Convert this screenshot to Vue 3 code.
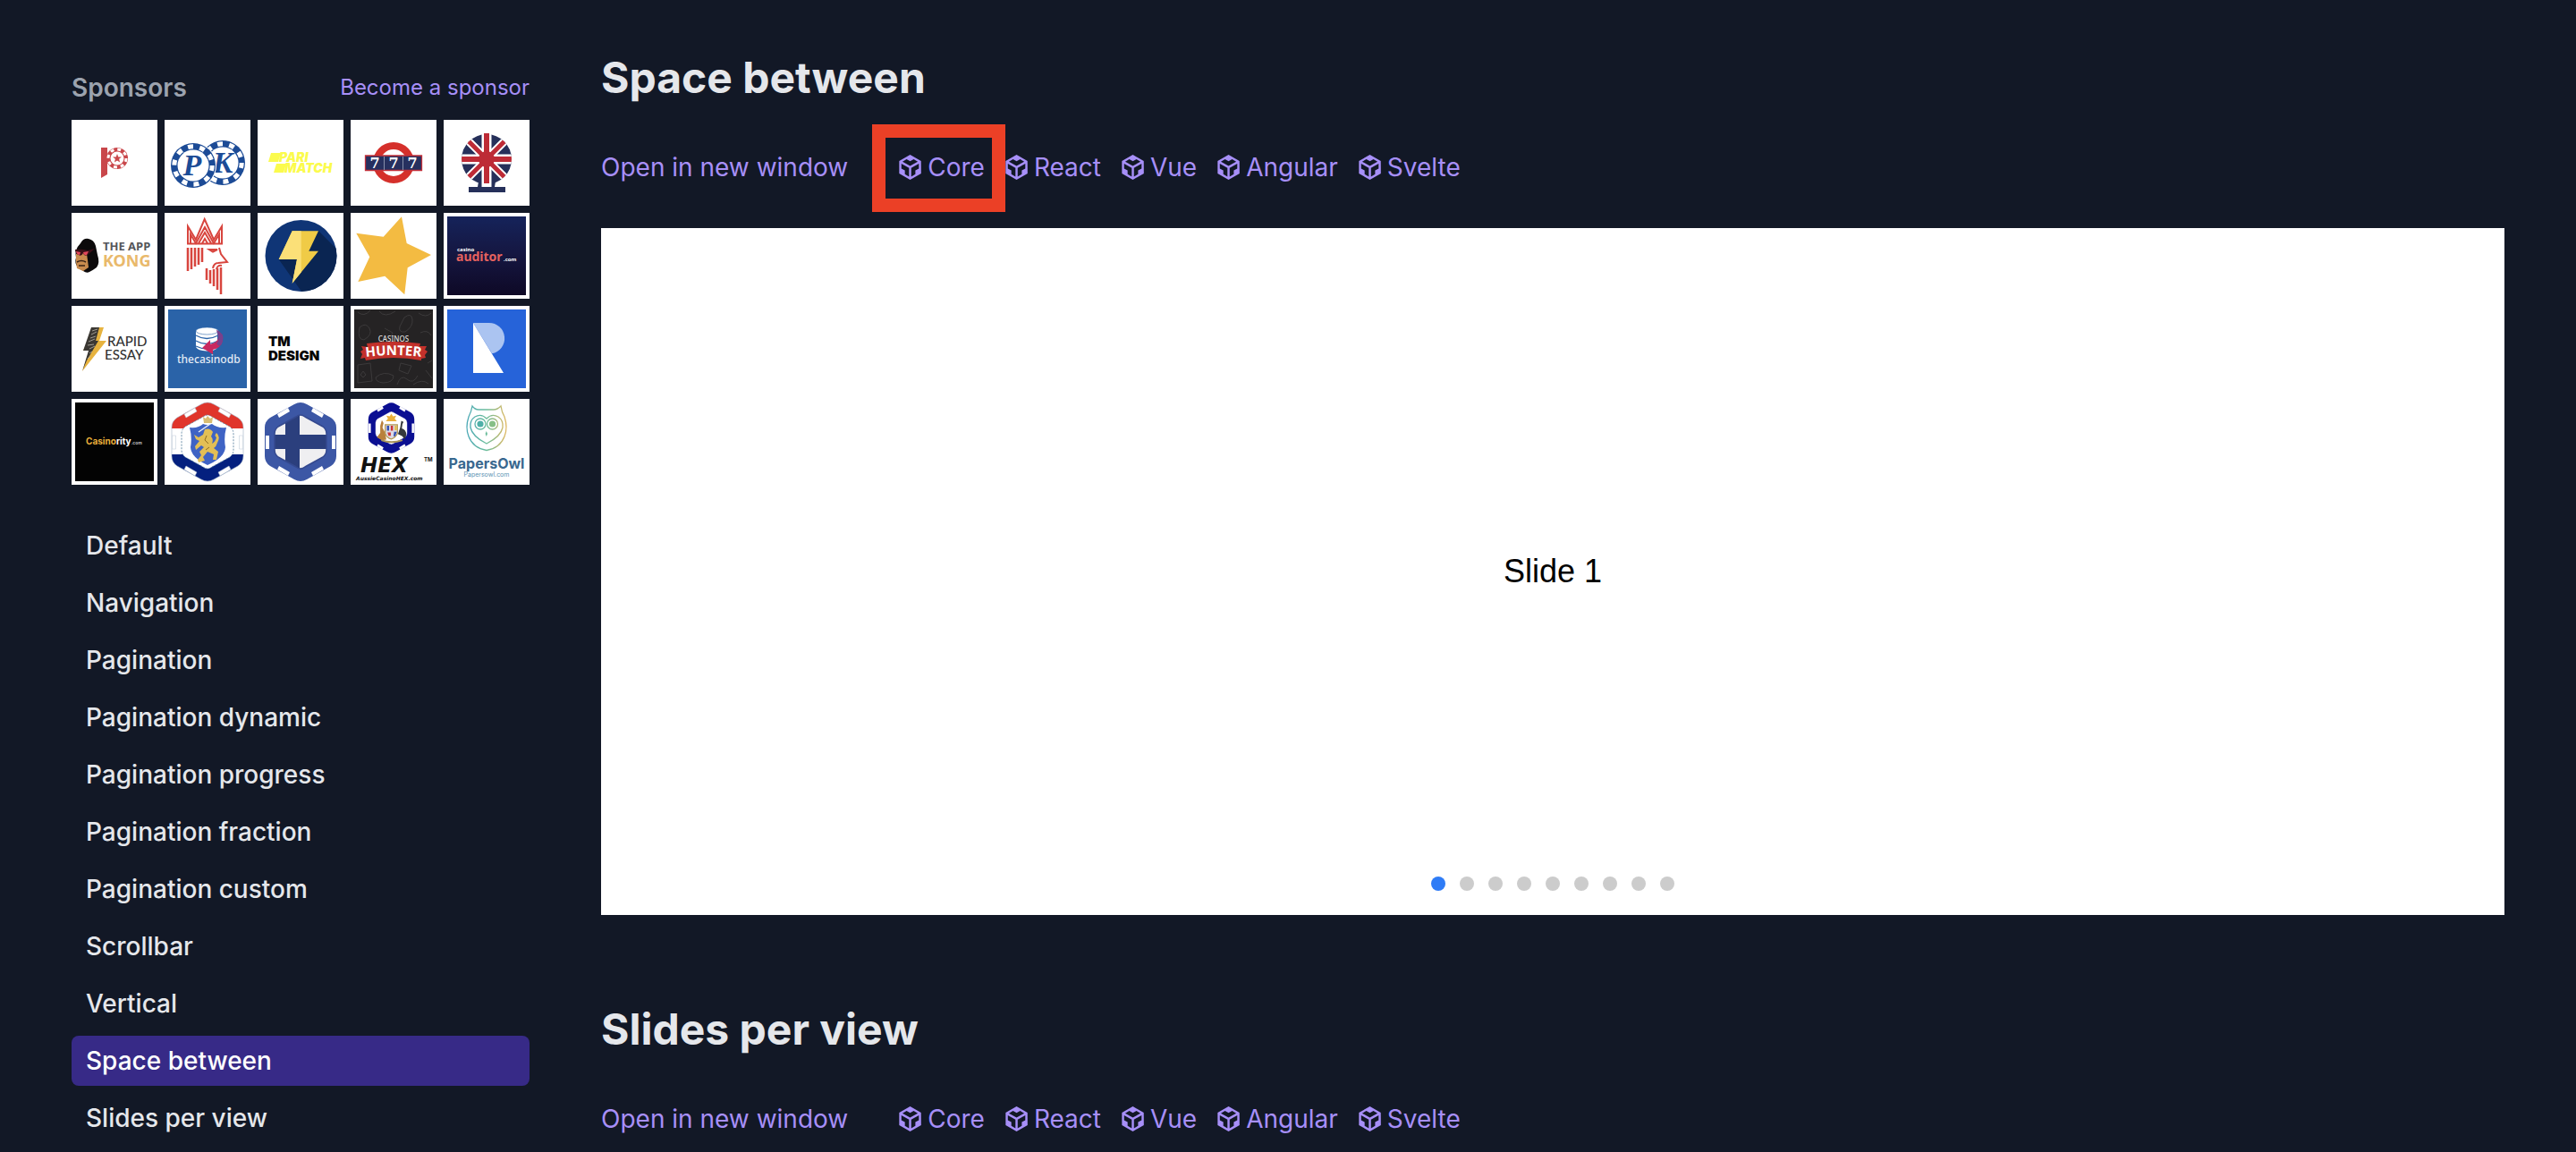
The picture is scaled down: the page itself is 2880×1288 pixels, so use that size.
<script setup>
import { ref } from "vue";

const demos = [
  "Default",
  "Navigation",
  "Pagination",
  "Pagination dynamic",
  "Pagination progress",
  "Pagination fraction",
  "Pagination custom",
  "Scrollbar",
  "Vertical",
  "Space between",
  "Slides per view",
];
const frameworks = ["Core", "React", "Vue", "Angular", "Svelte"];

const activeDemo = ref("Space between");
const activeSlide = ref(1);

const sections = [
  { title: "Space between", marked: "Core", slides: 9 },
  { title: "Slides per view", marked: null, slides: 0 },
];

// shared outlines for the casino chip logos
const hex =
  "M41 6Q48 2 55 6L82 21Q88 25 88 32V64Q88 71 82 75L55 90Q48 94 41 90L14 75Q8 71 8 64V32Q8 25 14 21Z";
const innerHex =
  "M43 20Q48 16 53 20L73 31Q77 34 77 39V57Q77 62 73 65L53 76Q48 80 43 76L23 65Q19 62 19 57V39Q19 34 23 31Z";
</script>

<template>
  <div class="page">
    <aside class="sidebar">
      <div class="sponsors-head">
        <span class="sponsors-title">Sponsors</span>
        <a class="become" href="#sponsor">Become a sponsor</a>
      </div>

      <div class="sponsors">
        <a href="#sponsor" aria-label="Chip P">
          <svg viewBox="0 0 96 96">
            <path d="M33 31h7v30l-7 4z" fill="#c9474b" />
            <circle cx="51" cy="43" r="12" fill="#c9474b" />
            <circle cx="51" cy="43" r="10" fill="none" stroke="#fff" stroke-width="3" stroke-dasharray="3.9 3.95" />
            <circle cx="51" cy="43" r="7.5" fill="#fff" />
            <path d="M51 38l1.3 3.4 3.7.2-2.9 2.2 1 3.6-3.1-2-3.1 2 1-3.6-2.9-2.2 3.7-.2z" fill="#c9474b" />
          </svg>
        </a>
        <a href="#sponsor" aria-label="PK">
          <svg viewBox="0 0 96 96">
            <circle cx="65" cy="48" r="25" fill="#1c4b96" />
            <circle cx="65" cy="48" r="21.2" fill="none" stroke="#fff" stroke-width="5" stroke-dasharray="6 7.32" />
            <circle cx="65" cy="48" r="17.5" fill="#fff" />
            <text class="serif" x="65" y="59" font-size="34" text-anchor="middle" fill="#1c4b96">K</text>
            <circle cx="32" cy="51" r="26" fill="#fff" />
            <circle cx="32" cy="51" r="25" fill="#1c4b96" />
            <circle cx="32" cy="51" r="21.2" fill="none" stroke="#fff" stroke-width="5" stroke-dasharray="6 7.32" />
            <circle cx="32" cy="51" r="17.5" fill="#fff" />
            <text class="serif" x="31" y="62" font-size="34" text-anchor="middle" fill="#1c4b96">P</text>
          </svg>
        </a>
        <a href="#sponsor" aria-label="Pari Match">
          <svg viewBox="0 0 96 96" fill="#fbfb4d">
            <path d="M15 37h11l-3 10H12zM21 49h11l-3 10H18z" />
            <text class="heavy slant" x="24" y="47" font-size="14">PARI</text>
            <text class="heavy slant" x="30" y="59" font-size="14">MATCH</text>
          </svg>
        </a>
        <a href="#sponsor" aria-label="777">
          <svg viewBox="0 0 96 96">
            <circle cx="48" cy="48" r="19" fill="none" stroke="#d5302b" stroke-width="8" />
            <path d="M16.500 40h63v16.500h-63z" fill="#26305f" stroke="#c2303a" stroke-width="1.300" />
            <path d="M37.500 41v15M58.500 41v15" stroke="#8890aa" />
            <g class="slab" fill="#fff" font-size="16" text-anchor="middle">
              <text x="27" y="54">7</text>
              <text x="48" y="54">7</text>
              <text x="69" y="54">7</text>
            </g>
          </svg>
        </a>
        <a href="#sponsor" aria-label="British casino">
          <svg viewBox="0 0 96 96">
            <clipPath id="jack"><circle cx="48" cy="44" r="28" /></clipPath>
            <path d="M41 66h14l3 3-1 6h12v6H28v-6h10l1-6z" fill="#26305a" />
            <g clip-path="url(#jack)">
              <path d="M20 16h56v56H20z" fill="#26305a" />
              <path d="M20 16l56 56M76 16L20 72" stroke="#fff" stroke-width="9" />
              <path d="M20 44h56" stroke="#fff" stroke-width="11" />
            </g>
            <path d="M48 16v59" stroke="#fff" stroke-width="11" />
            <g clip-path="url(#jack)">
              <path d="M20 16l56 56M76 16L20 72" stroke="#bd2b36" stroke-width="5" />
              <path d="M20 44h56" stroke="#bd2b36" stroke-width="6" />
              <circle cx="48" cy="44" r="9" fill="#bd2b36" />
            </g>
            <path d="M48 15v56" stroke="#bd2b36" stroke-width="6" />
          </svg>
        </a>

        <a href="#sponsor" aria-label="The App Kong">
          <svg viewBox="0 0 96 96">
            <path d="M10 34q3-6 9-5 6 1 8 8 1 5 2 10 3 9-1 14-4 3-8 5-3 2-7-1l-6-4q-4-5-2-11-2-9 5-16z" fill="#0c0a0b" />
            <path d="M5 46q6-4 12 0l1 7 1 8-6 4-7-3-1-7z" fill="#c98b4e" />
            <path d="M4 41q7-1 14 1l8-2-8 7q-4 2-5-2-2 4-5 2-4-1-4-6z" fill="#3a1018" />
            <path d="M5 43l5 1-1 3q-3 0-4-4zM13 44l6-1-2 4q-3 1-4-3z" fill="#e5485c" />
            <path d="M6 55q5-3 10 0M8 59h7" stroke="#3a2416" stroke-width="1.500" fill="none" />
            <text class="noto" x="35" y="42" font-size="13" fill="#55565a">THE APP</text>
            <text class="noto" x="35" y="60" font-size="18" fill="#e9b96b">KONG</text>
          </svg>
        </a>
        <a href="#sponsor" aria-label="King">
          <svg viewBox="0 0 96 96" fill="none" stroke="#d8453e" stroke-width="2">
            <path d="M26 35V15l9 15L44.700 7 55 30l9-15v20" />
            <path d="M25 34.500h40M29 34V24l6 10 10-18 10 18 6-10v10M38 34l7-12 7 12M42 34l3-5 3 5" />
            <path d="M26 39v26M30 39v24M34 39v21M38 39v19M42 39v16" stroke-width="2.500" />
            <path d="M50 41h9l-5 2.500zM61 39l2 7 7 9-10 1q-5 0-6 6M64 59q-5-1-6 4" />
            <path d="M47 62v13M51 64v15M55 63v19M59 62v24M63 61v30" stroke-width="2.500" />
          </svg>
        </a>
        <a href="#sponsor" aria-label="Bolt">
          <svg viewBox="0 0 96 96">
            <clipPath id="disc"><circle cx="48.500" cy="48" r="40" /></clipPath>
            <g clip-path="url(#disc)">
              <path d="M8 8h82v82H8z" fill="#0f3576" />
              <path d="M68 20l24 24v48H52L23.700 52 44 52z" fill="#0a2552" />
            </g>
            <path d="M38.700 20.300H68L57.300 42.700H68L38.700 78.700 44 52H23.700z" fill="#f0cb46" />
            <path d="M38.700 20.300h10v46.200l-10 12.200L44 52H23.700z" fill="#fbe078" />
          </svg>
        </a>
        <a href="#sponsor" aria-label="Star">
          <svg viewBox="0 0 96 96">
            <path
              d="M57 4.300L62.700 34 90 47 63.700 61.300 60.300 91.300 38.300 70.700 8.300 77 21.300 49.300 6.300 22.700 36.700 26.700z"
              fill="#f3bb42"
            />
          </svg>
        </a>
        <a href="#sponsor" aria-label="Casino Auditor">
          <svg viewBox="0 0 96 96">
            <linearGradient id="night" x1="0" y1="0" x2="0" y2="1">
              <stop offset="0" stop-color="#15235a" />
              <stop offset=".5" stop-color="#151640" />
              <stop offset="1" stop-color="#0e0926" />
            </linearGradient>
            <path d="M4 4h88v88H4z" fill="url(#night)" />
            <text class="noto" fill="#fff" font-size="6">
              <tspan x="15" y="43">casino</tspan>
              <tspan x="14" y="54" font-size="14" fill="#e5625f">auditor</tspan>
              <tspan x="67" y="54">.com</tspan>
            </text>
          </svg>
        </a>

        <a href="#sponsor" aria-label="Rapid Essay">
          <svg viewBox="0 0 96 96">
            <path d="M25 24h11l-5 15h8L12 73l8-23h-7z" fill="#e7b33f" />
            <path d="M22 24h9l-4 15h3L17 61l-5 12 7-23h-6z" fill="#3b3833" />
            <path
              d="M23 28l6-2M22 32l6-3M21 36l6-2M19 40l7-3M18 44l7-1M20 48l6-3M20 53l3-2M18 59l3-3"
              stroke="#b9b4a8"
              stroke-width=".8"
            />
            <text class="lato" x="40" y="45" font-size="15" fill="#333">RAPID</text>
            <text class="lato" x="37" y="60" font-size="15" fill="#333">ESSAY</text>
          </svg>
        </a>
        <a href="#sponsor" aria-label="thecasinodb">
          <svg viewBox="0 0 96 96">
            <path d="M4 4h88v88H4z" fill="#2a63a8" />
            <path d="M35 28v18q2 4 12 4.500 10 0 12-4V28z" fill="#fff" />
            <path d="M35 33q12 7 25 0M35 39q12 7 25 0M35 45q12 6 25 0" fill="none" stroke="#2a63a8" stroke-width="1.300" />
            <ellipse cx="47.500" cy="28" rx="12.500" ry="4" fill="#fff" stroke="#2a63a8" stroke-width=".6" />
            <path d="M58 27q9 4 7 12-2 8-11 10v5l-12-7 9-9v5q8-2 9-7 1-5-2-9z" fill="#c9295f" />
            <path d="M58 27q9 4 7 12-1 4-4 6l-3-3q3-3 2-8z" fill="#79408d" />
            <text class="noto-mid" x="14" y="64" font-size="12" fill="#e3ebf5">thecasinodb</text>
          </svg>
        </a>
        <a href="#sponsor" aria-label="TM Design">
          <svg viewBox="0 0 96 96" fill="#050505">
            <text class="heavy" x="12" y="45" font-size="15">TM</text>
            <text class="heavy" x="12" y="61" font-size="15">DESIGN</text>
          </svg>
        </a>
        <a href="#sponsor" aria-label="Casinos Hunter">
          <svg viewBox="0 0 96 96">
            <path d="M4 4h88v88H4z" fill="#252324" />
            <g fill="none" stroke="#3c3a3b" stroke-width="1">
              <path d="M8 7q7 6 14-2M32 6q6 8 18 0M60 13q8-6 9 2t-8 14q-8 1-6-6zM76 8q8 6 14 0M10 24q7-6 11 1t-6 13q-8 0-5-14z" />
              <path d="M38 25l9 5-3 8M78 30q8-4 12 3M8 66l14-2 2 20-16 2zM28 80q9-8 20-2 0 8-12 8-8-1-8-6zM56 64l12 3-4 9-10-4z" />
              <path d="M52 88q4-12 11-6t12-4M70 88q10-7 17-1M86 64l5-3M84 72l7 9M14 73l3 4-3 3-3-3z" />
            </g>
            <path id="arc" d="M17 57q31-4 62 0" fill="none" />
            <path d="M12 45l7 1-1-4q30-4 60 0l-1 3h8l-2 4 3 2-3 4 1 3-5 1v2q-31-6-62 0l-1-3-5 1 2-5-2-3 3-2z" fill="#c3312b" />
            <text class="noto-mid" x="48" y="40" font-size="8" text-anchor="middle" fill="#ddd">CASINOS</text>
            <text class="noto" font-size="15" fill="#fff"><textPath href="#arc">HUNTER</textPath></text>
          </svg>
        </a>
        <a href="#sponsor" aria-label="R">
          <svg viewBox="0 0 96 96">
            <path d="M4 4h88v88H4z" fill="#2663d9" />
            <path d="M33 19h17.500a17.300 17.300 0 0 1 3.500 34.300z" fill="#abc4f1" />
            <path d="M33 19v56h34z" fill="#fff" />
          </svg>
        </a>

        <a href="#sponsor" aria-label="Casinority">
          <svg viewBox="0 0 96 96">
            <path d="M4 4h88v88H4z" fill="#030303" />
            <text class="bold" x="16" y="51" font-size="10" fill="#fff"><tspan fill="#e9ae3a">Casino</tspan>rity<tspan font-size="5" fill="#bbb">.com</tspan></text>
          </svg>
        </a>
        <a href="#sponsor" aria-label="Dutch casino">
          <svg viewBox="0 0 96 96">
            <clipPath id="chip"><path :d="hex" /></clipPath>
            <g clip-path="url(#chip)">
              <path d="M0 0h96v33H0z" fill="#e0352b" />
              <path d="M0 62h96v34H0z" fill="#04207f" />
            </g>
            <path :d="hex" fill="none" stroke="#9fb0c4" stroke-width=".6" />
            <g fill="#fff" stroke="#b9c6d4" stroke-width=".5">
              <path d="M22 17l12-7 2 4-12 7zM62 10l12 7-2 4-12-7zM22 79l12 7 2-4-12-7zM62 86l12-7-2-4-12 7z" />
              <path d="M8.500 41h4v15h-4zM83.500 41h4v15h-4z" />
            </g>
            <path :d="innerHex" fill="#fff" />
            <path :d="innerHex" fill="none" stroke="#5e83a0" stroke-width=".9" stroke-dasharray="2 1.500" />
            <path d="M28 32q10 1 15-4 5 2 10 0 6 5 16 4-3 11-1 22-1 12-20 20-18-8-19-20 2-11-1-22z" fill="#3f63c4" />
            <path d="M43 20l3 2 2-3 3 3 3-2-1 7h-9z" fill="#d9bd72" />
            <path
              d="M45 34q6-2 9 3l-2 5q3 3 1 8 4-2 5-7-3-2 0-5 5 4 1 11-1 4-4 6l5 4-2 9h-4l1-6-7-3-5 6 2 4-7 2-1-3 4-5-2-4 5-5-3-2-6 5-1-4 5-6-4-2-2-5 5 3 5-3z"
              fill="#e3bf55"
            />
            <path d="M47 41l-2 5 4 4M50 54l-4 3" stroke="#8f6d22" fill="none" />
            <path d="M38 37l13-9" stroke="#e8edf5" stroke-width="1.500" />
          </svg>
        </a>
        <a href="#sponsor" aria-label="Finnish casino">
          <svg viewBox="0 0 96 96">
            <clipPath id="flag"><path :d="innerHex" /></clipPath>
            <path :d="hex" fill="#3c57a5" />
            <g fill="#fff">
              <path d="M22 17l12-7 2 4-12 7zM62 10l12 7-2 4-12-7zM22 79l12 7 2-4-12-7zM62 86l12-7-2-4-12 7z" />
              <path d="M9 41h4v15H9zM83 41h4v15h-4z" />
            </g>
            <g clip-path="url(#flag)">
              <path d="M0 0h96v96H0z" fill="#efeff1" />
              <path d="M31 0h16v96H31zM0 40h96v16H0z" fill="#2b3f7d" />
            </g>
            <path :d="innerHex" fill="none" stroke="#34498f" stroke-width="1.500" />
          </svg>
        </a>
        <a href="#sponsor" aria-label="Aussie Casino Hex">
          <svg viewBox="0 0 96 96">
            <svg x="17" y="2" width="57" height="61" viewBox="2 0 92 96">
              <path :d="hex" fill="#0b0f92" stroke="#0b0f92" stroke-width="3" />
              <path
                d="M22 15l10-6 2 4-10 6zM64 9l10 6-2 4-10-6zM22 81l10 6 2-4-10-6zM64 87l10-6-2-4-10 6zM7 40h4v17H7zM85 40h4v17h-4z"
                fill="#fff"
              />
              <path :d="innerHex" fill="#fff" stroke="#0b0f92" />
              <path d="M48 22l3 5 6-1-3 5 4 5H38l4-5-3-5 6 1z" fill="#e9ae3a" />
              <path d="M31 34l3 5-2 8 5 10 2 12-8 1-9-5 6-8V44z" fill="#b9803c" />
              <path d="M66 35l4 2-2 4-1 8q8 2 8 12l-3 8-4-6-8-4 4-12z" fill="#34383c" />
              <path d="M37 42h22v16q-4 8-11 10-8-2-11-10z" fill="#dcd9e5" stroke="#b49a52" stroke-width="2" />
              <path d="M40 44h4v9h-4zM53 55h5l-3 8h-3z" fill="#3250b3" />
              <path d="M47 44h4v9h-4zM41 56h6v6h-4z" fill="#cc3433" />
              <path d="M54 44h4v8h-4z" fill="#e2bd49" />
              <path d="M30 70q18 7 38 0" fill="none" stroke="#a7935a" stroke-width="3" />
            </svg>
            <text class="wide" x="11" y="82" font-size="23" fill="#111">HEX</text>
            <text class="bold" x="82" y="70" font-size="6" fill="#111">TM</text>
            <text class="wide" x="6" y="91" font-size="6" fill="#111">AussieCasinoHEX.com</text>
          </svg>
        </a>
        <a href="#sponsor" aria-label="PapersOwl">
          <svg viewBox="0 0 96 96">
            <linearGradient id="owl" gradientUnits="userSpaceOnUse" x1="26" y1="0" x2="70" y2="0">
              <stop offset="0" stop-color="#4aa8b5" />
              <stop offset=".5" stop-color="#6cbd9c" />
              <stop offset="1" stop-color="#dfb75f" />
            </linearGradient>
            <g fill="none" stroke="url(#owl)" stroke-width="1.300">
              <path d="M32 8q3 4 7 4h17q4 0 8-4 1 7 4 12 4 12 0 22-5 13-20 15.500-15-2.500-20-15.500-4-10 0-22 3-6 4-12z" />
              <path d="M48 22q-6-6-13-2-6 4-5 12 2 10 18 18 16-8 18-18 1-8-5-12-7-4-13 2z" />
              <circle cx="41" cy="28" r="6" />
              <circle cx="54.500" cy="28" r="6" />
            </g>
            <circle cx="41" cy="28" r="3.600" fill="#4fb0a8" />
            <circle cx="54.500" cy="28" r="3.600" fill="#86bf87" />
            <path d="M47.800 36l1.200 3-1.200 3-1.200-3z" fill="#6cbd9c" />
            <text class="bold" x="48" y="78" font-size="16" text-anchor="middle" fill="#39688f">PapersOwl</text>
            <text class="plain" x="48" y="87" font-size="7" text-anchor="middle" fill="#5d93b4">Papersowl.com</text>
          </svg>
        </a>
      </div>

      <nav class="demo-nav">
        <a
          v-for="demo in demos"
          :key="demo"
          href="#demos"
          :class="{ active: demo === activeDemo }"
          @click.prevent="activeDemo = demo"
          >{{ demo }}</a
        >
      </nav>
    </aside>

    <main class="content">
      <section v-for="section in sections" :key="section.title" class="demo">
        <h2>{{ section.title }}</h2>
        <div class="links">
          <a class="open" href="#open">Open in new window</a>
          <a
            v-for="name in frameworks"
            :key="name"
            href="#sandbox"
            class="sandbox"
            :class="{ marked: name === section.marked }"
          >
            <svg viewBox="0 0 24 24" fill="currentColor">
              <path
                d="M2 6l10.455-6L22.910 6 23 17.950 12.455 24 2 18V6zm2.088 2.481v4.757l3.345 1.860v3.516l3.972 2.296v-8.272L4.088 8.481zm16.739 0l-7.317 4.157v8.272l3.972-2.296V15.100l3.345-1.861V8.480zM5.134 6.601l7.303 4.144 7.320-4.180-3.871-2.197-3.410 1.945-3.430-1.968L5.133 6.600z"
              />
            </svg>
            <span>{{ name }}</span>
          </a>
        </div>

        <div v-if="section.slides" class="slider">
          <div class="slide">Slide {{ activeSlide }}</div>
          <div class="bullets">
            <button
              v-for="n in section.slides"
              :key="n"
              type="button"
              :class="{ active: n === activeSlide }"
              :aria-label="'Go to slide ' + n"
              @click="activeSlide = n"
            ></button>
          </div>
        </div>
      </section>
    </main>
  </div>
</template>

<style>
body {
  margin: 0;
  background: #121826;
}
</style>

<style scoped>
.page {
  display: grid;
  grid-template-columns: 512px minmax(0, 1fr);
  column-gap: 80px;
  box-sizing: border-box;
  min-height: 100vh;
  padding: 0 80px;
  background: #121826;
  color: #e5e7eb;
  font-family: Inter, "Liberation Sans", sans-serif;
  font-size: 28px;
  line-height: 40px;
}

a {
  color: #a78ff8;
  text-decoration: none;
}

.sidebar {
  padding-top: 78px;
}

.sponsors-head {
  display: flex;
  justify-content: space-between;
  align-items: center;
  margin-bottom: 16px;
}

.sponsors-title {
  color: #9ca3af;
  font-weight: 600;
}

.become {
  font-size: 24px;
}

.sponsors {
  display: grid;
  grid-template-columns: repeat(5, 1fr);
  gap: 8px;
}

.sponsors a {
  background: #fff;
  aspect-ratio: 1;
}

.sponsors svg {
  display: block;
  width: 100%;
}

.sponsors svg svg {
  width: 57px;
}

.plain {
  font-family: Inter, sans-serif;
}

.bold {
  font-family: Inter, sans-serif;
  font-weight: 700;
}

.heavy {
  font-family: Inter, sans-serif;
  font-weight: 900;
}

.slant {
  font-style: italic;
}

.serif {
  font-family: "Liberation Serif", serif;
  font-style: italic;
  font-weight: 700;
}

.slab {
  font-family: "DejaVu Serif", serif;
  font-weight: 700;
}

.noto {
  font-family: "Noto Sans", sans-serif;
  font-weight: 700;
}

.noto-mid {
  font-family: "Noto Sans", sans-serif;
  font-weight: 500;
}

.lato {
  font-family: Lato, sans-serif;
  font-weight: 500;
}

.wide {
  font-family: "DejaVu Sans", sans-serif;
  font-style: italic;
  font-weight: 700;
}

.demo-nav {
  display: flex;
  flex-direction: column;
  gap: 8px;
  margin-top: 40px;
}

.demo-nav a {
  padding: 8px 16px;
  border-radius: 8px;
  color: #e5e7eb;
  font-weight: 500;
}

.demo-nav a.active {
  background: #372a87;
  color: #fff;
}

.content {
  display: flex;
  flex-direction: column;
  gap: 96px;
  padding-top: 55px;
}

h2 {
  margin: 0 0 48px;
  font-size: 48px;
  font-weight: 700;
  line-height: 64px;
}

.links {
  display: flex;
  flex-wrap: wrap;
  gap: 21px;
}

.open {
  margin-right: 34px;
}

.sandbox {
  position: relative;
  display: flex;
  align-items: center;
  gap: 6px;
}

.sandbox svg {
  width: 28px;
  height: 28px;
}

/* red frame drawn over the neighbouring links */
.marked::after {
  content: "";
  position: absolute;
  inset: -28px -23px -30px -28px;
  border: 15px solid #eb4026;
}

.slider {
  position: relative;
  display: flex;
  min-height: 768px;
  margin-top: 48px;
  background: #fff;
}

.slide {
  display: flex;
  flex: 1;
  align-items: center;
  justify-content: center;
  color: #000;
  font-family: "Liberation Sans", Arial, sans-serif;
  font-size: 36px;
}

.bullets {
  position: absolute;
  right: 0;
  bottom: 27px;
  left: 0;
  display: flex;
  justify-content: center;
  gap: 16px;
}

.bullets button {
  width: 16px;
  height: 16px;
  padding: 0;
  border: 0;
  border-radius: 50%;
  background: #ccc;
  cursor: pointer;
}

.bullets button.active {
  background: #2f7cf6;
}
</style>
